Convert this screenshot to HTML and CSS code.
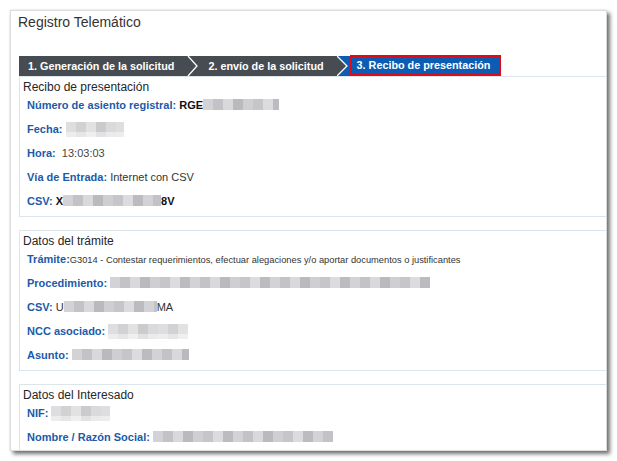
FILE: index.html
```html
<!DOCTYPE html>
<html lang="es">
  <head>
    <meta charset="UTF-8" />
    <title>Registro Telemático</title>
    <link rel="stylesheet" href="styles.css">
  </head>
  <body>
    <div class="window">
      <h1 class="title">Registro Telemático</h1>

      <!-- wizard steps -->
      <div class="steps">
        <div class="step">1. Generación de la solicitud</div>
        <svg class="sep sep-dark" width="12" height="20" viewBox="0 0 12 20">
          <polyline points="1,0 10,10 1,20" fill="none" stroke="#ffffff" stroke-width="1.3" />
        </svg>
        <div class="step">2. envío de la solicitud</div>
        <svg class="sep sep-blue" width="13" height="20" viewBox="0 0 13 20">
          <polygon points="0,0 10,10 0,20" fill="#474c53" />
          <polyline points="0,0 10,10 0,20" fill="none" stroke="#ffffff" stroke-width="1.3" />
        </svg>
        <div class="step step-active">3. Recibo de presentación</div>
      </div>

      <section class="box">
        <div class="box-title">Recibo de presentación</div>
        <div class="row"><span class="label">Número de asiento registral:</span> <b class="strong">RGE</b><span class="blur w-num"></span></div>
        <div class="row"><span class="label">Fecha:</span> <span class="blur blur-light w-fecha"></span></div>
        <div class="row"><span class="label">Hora:</span>&nbsp;&nbsp;<span class="value hora">13:03:03</span></div>
        <div class="row"><span class="label">Vía de Entrada:</span> <span class="value">Internet con CSV</span></div>
        <div class="row"><span class="label">CSV:</span> <b class="strong">X</b><span class="blur w-csv1"></span><b class="strong">8V</b></div>
      </section>

      <section class="box">
        <div class="box-title">Datos del trámite</div>
        <div class="row"><span class="label">Trámite:</span><span class="value small">G3014 - Contestar requerimientos, efectuar alegaciones y/o aportar documentos o justificantes</span></div>
        <div class="row"><span class="label">Procedimiento:</span> <span class="blur w-proc"></span></div>
        <div class="row"><span class="label">CSV:</span> <span class="value">U</span><span class="blur w-csv2"></span><span class="value">MA</span></div>
        <div class="row"><span class="label">NCC asociado:</span> <span class="blur blur-light w-ncc"></span></div>
        <div class="row"><span class="label">Asunto:</span> <span class="blur w-asunto"></span></div>
      </section>

      <section class="box">
        <div class="box-title">Datos del Interesado</div>
        <div class="row"><span class="label">NIF:</span> <span class="blur blur-light w-nif"></span></div>
        <div class="row"><span class="label">Nombre / Razón Social:</span> <span class="blur w-nombre"></span></div>
      </section>
    </div>
  </body>
</html>
```

FILE: styles.css
```css
body {
  margin: 0;
  padding: 10px;
  background: #ffffff;
  font-family: "Liberation Sans", Arial, sans-serif;
  color: #333333;
}

.window {
  box-sizing: border-box;
  width: 597px;
  height: 441px;
  padding: 3px 0 0 8px;
  background: #ffffff;
  border: 1px solid #dcdcdc;
  box-shadow: 3px 3px 4px rgba(0, 0, 0, 0.55), 0 0 2px rgba(0, 0, 0, 0.12);
  overflow: hidden;
}

.title {
  margin: 0 0 0 -1px;
  font-size: 14px;
  line-height: 16px;
  font-weight: normal;
  color: #333333;
}

/* steps bar */
.steps {
  display: flex;
  height: 20px;
  margin-top: 26px;
}

.step {
  height: 20px;
  line-height: 20px;
  padding: 0 13px 0 9px;
  background: #474c53;
  color: #ffffff;
  font-size: 10.8px;
  font-weight: bold;
  white-space: nowrap;
}

.sep {
  display: block;
  flex: none;
}

.sep-dark {
  background: #474c53;
}

.sep-blue {
  background: #0b5cb2;
}

.step-active {
  box-sizing: border-box;
  height: 21px;
  line-height: 17px;
  margin: -1px 0 0 0;
  padding: 0 9px 0 5px;
  background: #0b5cb2;
  border: 2px solid #e30a17;
}

/* sections */
.box {
  margin: 0 -4px 13px 0;
  padding: 3px 0 3px 0;
  border: 1px solid #dde5ec;
  background: #ffffff;
}

.box-title {
  padding-left: 3px;
  margin-bottom: -1px;
  font-size: 12px;
  line-height: 14px;
  color: #262626;
}

.row {
  height: 24px;
  line-height: 24px;
  padding-left: 7px;
  font-size: 11px;
  white-space: nowrap;
}

.label {
  color: #1c5aa9;
  font-weight: bold;
}

.strong {
  color: #111111;
  font-weight: bold;
}

.value {
  color: #333333;
}

.hora {
  color: #4a4540;
}

.small {
  font-size: 9.3px;
}

/* pixelated redacted values */
.blur {
  display: inline-block;
  height: 11px;
  vertical-align: -1px;
  background: repeating-linear-gradient(90deg,
    #d3d3d7 0 10px, #c3c2c7 10px 20px, #d9d9db 20px 30px,
    #b9b9be 30px 40px, #cfcfd2 40px 50px, #c7c4ca 50px 60px,
    #dcdcde 60px 70px, #bcbcc0 70px 80px);
}

.blur-light {
  height: 15px;
  vertical-align: -4px;
  background:
    linear-gradient(to bottom, transparent 0 10px, rgba(255, 255, 255, 0.45) 10px),
    repeating-linear-gradient(90deg,
      #dedee0 0 10px, #d2d2d5 10px 20px, #e2e2e3 20px 30px,
      #cbcbce 30px 40px, #dadadc 40px 50px);
}

.w-num { width: 76px; }
.w-fecha { width: 58px; }
.w-csv1 { width: 98px; }
.w-proc { width: 320px; }
.w-csv2 { width: 93px; }
.w-ncc { width: 80px; }
.w-asunto { width: 117px; }
.w-nif { width: 59px; }
.w-nombre { width: 180px; }
```
